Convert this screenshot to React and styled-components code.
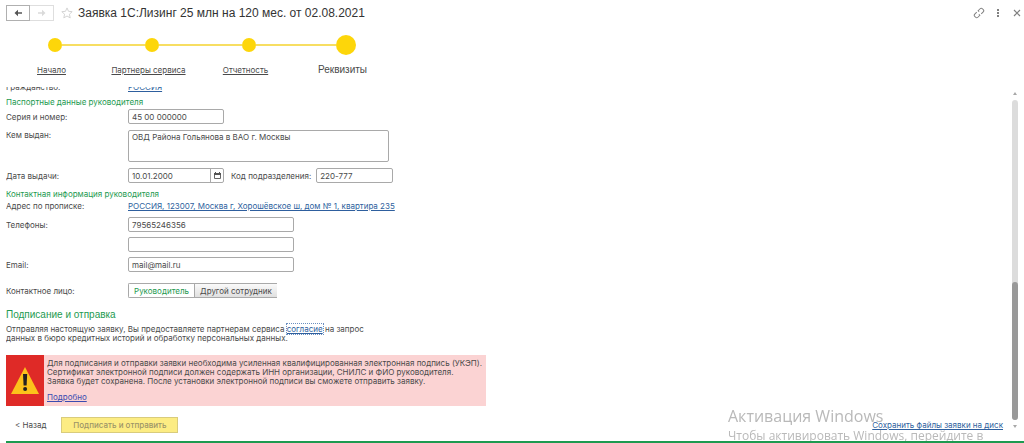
import React, { useState } from 'react';
import styled, { createGlobalStyle } from 'styled-components';

const colors = {
  text: '#4a4a4a',
  green: '#1d9a50',
  link: '#2e5f9e',
  yellow: '#fdd60a',
  border: '#a9a9a9',
  danger: '#df2a27',
  dangerLight: '#fbd3d3',
};

const headingFont = "'Liberation Sans', Arial, sans-serif";

const GlobalStyle = createGlobalStyle`
  * {
    box-sizing: border-box;
  }

  body {
    margin: 0;
    background: #fff;
    color: ${colors.text};
    font-family: Inter, 'Liberation Sans', sans-serif;
    font-size: 8px;
    line-height: 10px;
    overflow: hidden;
  }

  input, textarea, button {
    font: inherit;
    color: inherit;
  }
`;

const Page = styled.div`
  display: flex;
  flex-direction: column;
  padding-left: 6px;
`;

const TitleBar = styled.header`
  display: flex;
  align-items: center;
  height: 26px;
`;

const NavButtons = styled.div`
  display: flex;
  margin-right: 6px;
`;

const NavButton = styled.button`
  display: flex;
  align-items: center;
  justify-content: center;
  width: 24px;
  height: 16px;
  padding: 0;
  background: #fff;
  border: 1px solid ${p => (p.disabled ? '#dedede' : '#b0b0b0')};
  border-left-width: ${p => (p.disabled ? '0' : '1px')};
  color: ${p => (p.disabled ? '#dadada' : '#555')};
`;

const IconButton = styled.button`
  display: flex;
  align-items: center;
  justify-content: center;
  width: 14px;
  height: 14px;
  padding: 0;
  background: none;
  border: none;
  color: ${p => (p.$light ? '#d4d4d4' : '#808080')};
`;

const Title = styled.h1`
  flex: 1;
  margin: 0 0 0 4px;
  color: #333;
  font-family: ${headingFont};
  font-size: 12px;
  font-weight: 400;
  line-height: 16px;
`;

const Tools = styled.div`
  display: flex;
  gap: 5px;
`;

const Steps = styled.ol`
  display: flex;
  margin: 0;
  padding: 8px 0 0;
  list-style: none;
`;

const Step = styled.li`
  display: flex;
  flex-direction: column;
  align-items: center;
  width: 97px;
`;

const StepTrack = styled.div`
  display: flex;
  align-items: center;
  width: 100%;
  height: 22px;
`;

const StepLine = styled.span`
  flex: 1;
  height: 2px;
  background: ${p => (p.$hidden ? 'transparent' : '#f7de62')};
`;

const StepDot = styled.span`
  width: ${p => (p.$current ? '20px' : '14px')};
  height: ${p => (p.$current ? '20px' : '14px')};
  border-radius: 50%;
  background: ${colors.yellow};
`;

const StepLink = styled.a`
  display: flex;
  align-items: center;
  height: 28px;
  padding-right: 6px;
  color: ${colors.text};
  font-family: ${p => (p.$current ? headingFont : 'inherit')};
  font-size: ${p => (p.$current ? '10px' : '8px')};
  text-decoration: ${p => (p.$current ? 'none' : 'underline')};
`;

const Body = styled.div`
  display: flex;
  padding-top: 3px;
`;

const Content = styled.div`
  flex: 1;
  min-width: 0;
`;

const Form = styled.form`
  overflow: hidden;
`;

const ClippedRow = styled.div`
  display: flex;
  align-items: flex-end;
  height: 5px;
  margin-bottom: 5px;
`;

const Row = styled.div`
  display: flex;
  align-items: ${p => (p.$top ? 'flex-start' : 'center')};
  margin-bottom: ${p => p.$gap || '5px'};
`;

const Label = styled.label`
  width: 122px;
`;

const InlineLabel = styled.label`
  margin: 0 5px 0 7px;
`;

const SectionTitle = styled.h2`
  margin: 0 0 ${p => (p.$large ? '3px' : '2px')};
  color: ${colors.green};
  font-family: ${p => (p.$large ? headingFont : 'inherit')};
  font-size: ${p => (p.$large ? '10px' : '8px')};
  font-weight: 400;
  line-height: ${p => (p.$large ? '14px' : '10px')};
`;

const Input = styled.input`
  width: ${p => p.$width || '166px'};
  height: 15px;
  padding: 0 3px;
  background: #fff;
  border: 1px solid ${colors.border};
  border-radius: 2px;
  outline: none;
`;

const TextArea = styled.textarea`
  display: block;
  width: 261px;
  height: 32px;
  padding: 1px 3px;
  background: #fff;
  border: 1px solid ${colors.border};
  border-radius: 2px;
  outline: none;
  resize: none;
`;

const DateField = styled.div`
  display: flex;
  width: 96px;
  height: 15px;
  border: 1px solid ${colors.border};
  border-radius: 2px;
`;

const DateInput = styled.input`
  flex: 1;
  min-width: 0;
  padding: 0 3px;
  background: none;
  border: none;
  outline: none;
`;

const CalendarButton = styled.button`
  display: flex;
  align-items: center;
  justify-content: center;
  width: 13px;
  padding: 0;
  background: none;
  border: none;
  border-left: 1px solid ${colors.border};
`;

const Link = styled.a`
  color: ${colors.link};
  text-decoration: underline;
`;

const FocusedLink = styled(Link)`
  outline: 1px dotted #6b8fc0;
`;

const Segments = styled.div`
  display: flex;
  height: 15px;
  border: 1px solid ${colors.border};
  border-radius: 2px 0 0 2px;
  border-right: none;
`;

const Segment = styled.label`
  display: flex;
  align-items: center;
  justify-content: center;
  width: ${p => p.$width};
  background: ${p => (p.$active ? '#fff' : 'linear-gradient(#fafafa, #e0e0e0)')};
  color: ${p => (p.$active ? colors.green : colors.text)};

  & + & {
    border-left: 1px solid ${colors.border};
  }
`;

const HiddenRadio = styled.input`
  appearance: none;
  width: 0;
  height: 0;
  margin: 0;
`;

const Agreement = styled.p`
  max-width: 372px;
  margin: 0 0 12px;
  line-height: 9px;
`;

const Alert = styled.div`
  display: flex;
  max-width: 480px;
  min-height: 51px;
  background: ${colors.dangerLight};
`;

const AlertIcon = styled.div`
  display: flex;
  flex: none;
  align-items: center;
  justify-content: center;
  width: 38px;
  background: ${colors.danger};
`;

const AlertText = styled.div`
  flex: 1;
  padding: 4px 0 4px 3px;
`;

const AlertLine = styled.p`
  margin: 0;
  line-height: 9px;
  white-space: nowrap;
`;

const AlertMore = styled(Link)`
  display: inline-block;
  margin-top: 6px;
  color: #3a4bb0;
`;

const Footer = styled.footer`
  display: flex;
  align-items: center;
  padding: 11px 9px 8px;
`;

const BackButton = styled.button`
  margin-right: 15px;
  padding: 0;
  background: none;
  border: none;
`;

const SubmitButton = styled.button`
  width: 117px;
  height: 16px;
  padding: 0;
  background: #fcec83;
  border: 1px solid #d9cc7c;
  color: #9c9468;
  font-weight: 500;
`;

const SaveLink = styled(Link)`
  margin-left: auto;
`;

const Scrollbar = styled.div`
  display: flex;
  flex-direction: column;
  align-items: center;
  width: 6px;
  margin-right: 6px;
  padding: 5px 0 13px;
`;

const ScrollTrack = styled.div`
  display: flex;
  flex: 1;
  flex-direction: column;
  justify-content: flex-end;
  width: 6px;
  margin: 5px 0;
  border-radius: 3px;
  background: #dcdcdc;
`;

const ScrollThumb = styled.div`
  height: 43%;
  border-radius: 3px;
  background: #999;
`;

const BottomLine = styled.div`
  height: 2px;
  background: ${colors.green};
`;

const Watermark = styled.div`
  position: fixed;
  right: 30px;
  bottom: 2px;
  width: 266px;
  height: 35px;
  overflow: hidden;
  color: #b9b9b9;
  font-family: 'Open Sans', 'Noto Sans', sans-serif;
  font-size: 12px;
  line-height: 20px;
  white-space: nowrap;
  pointer-events: none;
`;

const WatermarkTitle = styled.div`
  font-size: 16px;
  line-height: 20px;
`;

const steps = ['Начало', 'Партнеры сервиса', 'Отчетность', 'Реквизиты'];

const Arrow = ({ flip }) => (
  <svg width="10" height="8" viewBox="0 0 10 8" transform={flip ? 'scale(-1 1)' : undefined}>
    <path d="M5 .8 1.5 4 5 7.2V4.800h4V3.200H5z" fill="currentColor" />
  </svg>
);

const ScrollArrow = ({ down }) => (
  <svg width="4" height="3" viewBox="0 0 4 3">
    <path d={down ? 'M0 0h4L2 3z' : 'M0 3h4L2 0z'} fill="#a8a8a8" />
  </svg>
);

export default function App() {
  const [contact, setContact] = useState('head');

  return (
    <>
      <GlobalStyle />
      <Page>
        <TitleBar>
          <NavButtons>
            <NavButton aria-label="Назад"><Arrow /></NavButton>
            <NavButton aria-label="Вперед" disabled><Arrow flip /></NavButton>
          </NavButtons>
          <IconButton $light aria-label="В избранное">
            <svg width="12" height="12" viewBox="0 0 12 12" fill="none" stroke="currentColor">
              <path d="M6 .9 7.5 4.3l3.7.4-2.8 2.5.8 3.7L6 9 2.8 10.9l.8-3.7L.8 4.7l3.7-.4z" />
            </svg>
          </IconButton>
          <Title>Заявка 1С:Лизинг 25 млн на 120 мес. от 02.08.2021</Title>
          <Tools>
            <IconButton aria-label="Ссылка">
              <svg width="12" height="12" viewBox="0 0 12 12" fill="none" stroke="currentColor">
                <g transform="rotate(-45 6 6)">
                  <path d="M5 3.8H2.2a1.6 1.6 0 0 0-1.6 1.6v1.2a1.6 1.6 0 0 0 1.6 1.6H5V6.8M7 8.2h2.8a1.6 1.6 0 0 0 1.6-1.6V5.4a1.6 1.6 0 0 0-1.6-1.6H7v1.4" />
                </g>
              </svg>
            </IconButton>
            <IconButton aria-label="Еще">
              <svg width="4" height="8" viewBox="0 0 4 8" fill="currentColor">
                <path d="M1 0h2v2H1zM1 3h2v2H1zM1 6h2v2H1z" />
              </svg>
            </IconButton>
            <IconButton aria-label="Закрыть">
              <svg width="8" height="8" viewBox="0 0 8 8" fill="none" stroke="currentColor" strokeWidth="1.2">
                <path d="m1 1 6 6M7 1 1 7" />
              </svg>
            </IconButton>
          </Tools>
        </TitleBar>

        <Steps>
          {steps.map((step, i) => {
            const current = i === steps.length - 1;
            return (
              <Step key={step}>
                <StepTrack>
                  <StepLine $hidden={i === 0} />
                  <StepDot $current={current} />
                  <StepLine $hidden={current} />
                </StepTrack>
                <StepLink href="#" $current={current}>{step}</StepLink>
              </Step>
            );
          })}
        </Steps>

        <Body>
          <Content>
            <Form onSubmit={e => e.preventDefault()}>
              <ClippedRow>
                <Label as="span">Гражданство:</Label>
                <Link href="#">РОССИЯ</Link>
              </ClippedRow>

              <SectionTitle>Паспортные данные руководителя</SectionTitle>
              <Row $gap="6px">
                <Label htmlFor="series">Серия и номер:</Label>
                <Input id="series" $width="96px" defaultValue="45 00 000000" />
              </Row>
              <Row $top $gap="6px">
                <Label htmlFor="issuer">Кем выдан:</Label>
                <TextArea id="issuer" defaultValue="ОВД Района Гольянова в ВАО г. Москвы" />
              </Row>
              <Row $gap="6px">
                <Label htmlFor="date">Дата выдачи:</Label>
                <DateField>
                  <DateInput id="date" defaultValue="10.01.2000" />
                  <CalendarButton type="button" aria-label="Выбрать дату">
                    <svg width="7" height="7" viewBox="0 0 7 7">
                      <path d="M.5 1.5h6v5h-6z" fill="none" stroke="#666" />
                      <path d="M0 1h7v2H0zM1 0h1v1H1zM5 0h1v1H5z" fill="#555" />
                    </svg>
                  </CalendarButton>
                </DateField>
                <InlineLabel htmlFor="code">Код подразделения:</InlineLabel>
                <Input id="code" $width="77px" defaultValue="220-777" />
              </Row>

              <SectionTitle>Контактная информация руководителя</SectionTitle>
              <Row $gap="6px">
                <Label as="span">Адрес по прописке:</Label>
                <Link href="#">РОССИЯ, 123007, Москва г, Хорошёвское ш, дом № 1, квартира 235</Link>
              </Row>
              <Row>
                <Label htmlFor="phone">Телефоны:</Label>
                <Input id="phone" defaultValue="79565246356" />
              </Row>
              <Row>
                <Label as="span" />
                <Input aria-label="Дополнительный телефон" />
              </Row>
              <Row $gap="11px">
                <Label htmlFor="email">Email:</Label>
                <Input id="email" defaultValue="mail@mail.ru" />
              </Row>
              <Row $gap="10px">
                <Label as="span">Контактное лицо:</Label>
                <Segments role="radiogroup" aria-label="Контактное лицо">
                  <Segment $width="65px" $active={contact === 'head'}>
                    <HiddenRadio type="radio" name="contact" checked={contact === 'head'} onChange={() => setContact('head')} />
                    Руководитель
                  </Segment>
                  <Segment $width="83px" $active={contact === 'other'}>
                    <HiddenRadio type="radio" name="contact" checked={contact === 'other'} onChange={() => setContact('other')} />
                    Другой сотрудник
                  </Segment>
                </Segments>
              </Row>

              <SectionTitle $large>Подписание и отправка</SectionTitle>
              <Agreement>
                Отправляя настоящую заявку, Вы предоставляете партнерам сервиса{' '}
                <FocusedLink href="#">согласие</FocusedLink> на запрос
                данных в бюро кредитных историй и обработку персональных данных.
              </Agreement>

              <Alert>
                <AlertIcon>
                  <svg width="28" height="28" viewBox="0 0 28 28">
                    <path d="M14 0 28 27H0z" fill="#fcc21b" />
                    <path d="M12 7h4.200l-.6 11.500h-3z" fill="#222" />
                    <circle cx="14.1" cy="22" r="2" fill="#222" />
                  </svg>
                </AlertIcon>
                <AlertText>
                  <AlertLine>Для подписания и отправки заявки необходима усиленная квалифицированная электронная подпись (УКЭП).</AlertLine>
                  <AlertLine>Сертификат электронной подписи должен содержать ИНН организации, СНИЛС и ФИО руководителя.</AlertLine>
                  <AlertLine>Заявка будет сохранена. После установки электронной подписи вы сможете отправить заявку.</AlertLine>
                  <AlertMore href="#">Подробно</AlertMore>
                </AlertText>
              </Alert>
            </Form>

            <Footer>
              <BackButton type="button">&lt; Назад</BackButton>
              <SubmitButton type="button" disabled>Подписать и отправить</SubmitButton>
              <SaveLink href="#">Сохранить файлы заявки на диск</SaveLink>
            </Footer>
          </Content>

          <Scrollbar>
            <ScrollArrow />
            <ScrollTrack>
              <ScrollThumb />
            </ScrollTrack>
            <ScrollArrow down />
          </Scrollbar>
        </Body>

        <BottomLine />
      </Page>

      <Watermark>
        <WatermarkTitle>Активация Windows</WatermarkTitle>
        Чтобы активировать Windows, перейдите в
      </Watermark>
    </>
  );
}
